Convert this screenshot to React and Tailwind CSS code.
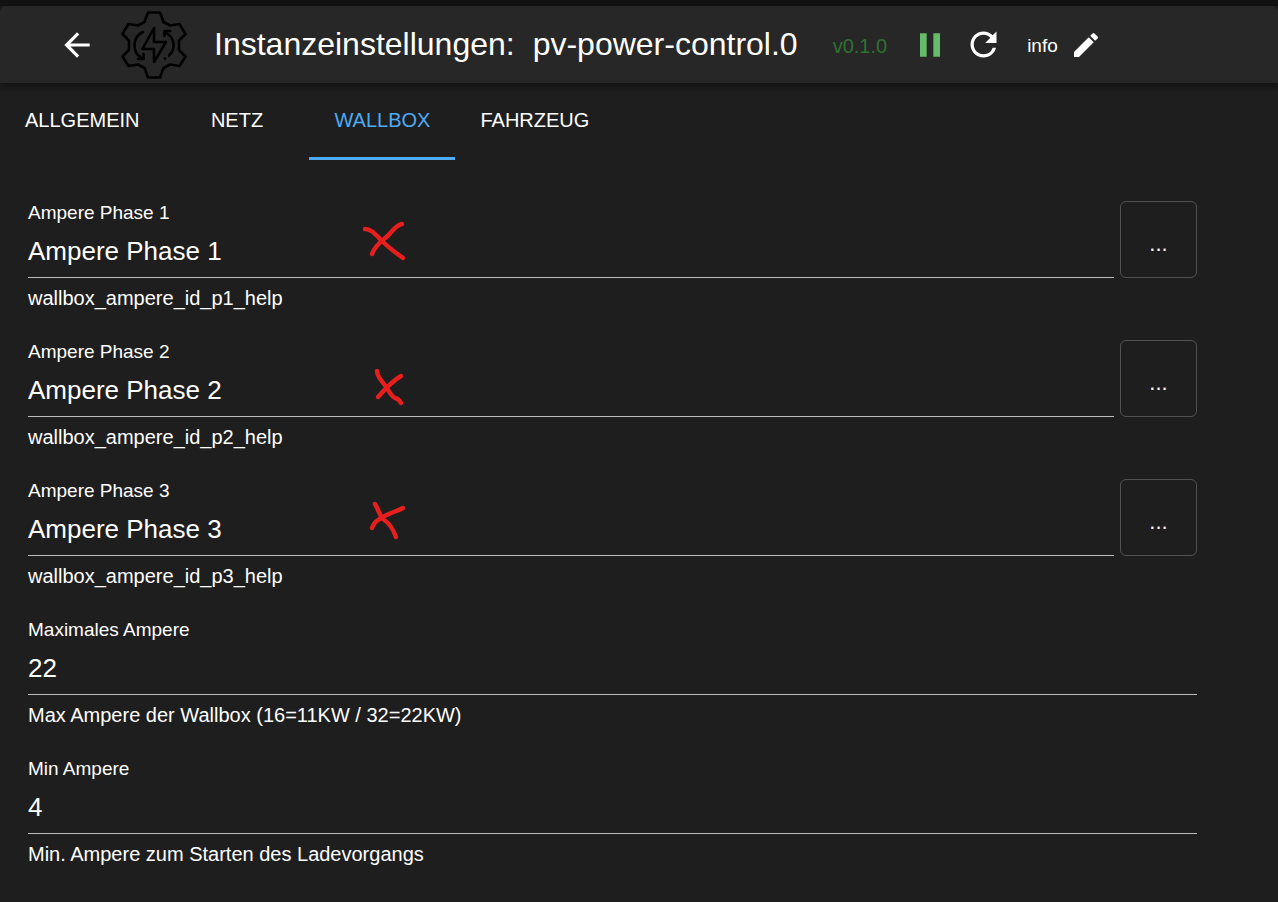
import React, { useState } from 'react';
import { MdArrowBack, MdPause, MdRefresh, MdEdit } from 'react-icons/md';

const TABS = [
  { id: 'allgemein', label: 'ALLGEMEIN' },
  { id: 'netz', label: 'NETZ' },
  { id: 'wallbox', label: 'WALLBOX' },
  { id: 'fahrzeug', label: 'FAHRZEUG' },
];

// mark: strokes of the hand-drawn cross, in a box that starts 330px into the field
const FIELDS = [
  {
    id: 'wallbox_ampere_id_p1',
    label: 'Ampere Phase 1',
    value: 'Ampere Phase 1',
    help: 'wallbox_ampere_id_p1_help',
    picker: true,
    mark: 'M7 28C13 28 17 33 24 40S38 52 45 57M44 23C37 24 33 33 26 38C20 43 16 47 14 53',
  },
  {
    id: 'wallbox_ampere_id_p2',
    label: 'Ampere Phase 2',
    value: 'Ampere Phase 2',
    help: 'wallbox_ampere_id_p2_help',
    picker: true,
    mark: 'M19 31C19 37 24 41 29 48C32 53 34 57 37 58C41 59 42 61 43 63M43 36C36 40 27 49 20 57',
  },
  {
    id: 'wallbox_ampere_id_p3',
    label: 'Ampere Phase 3',
    value: 'Ampere Phase 3',
    help: 'wallbox_ampere_id_p3_help',
    picker: true,
    mark: 'M17 25C20 30 21 35 25 40C31 44 35 49 38 58M45 29C38 33 31 34 25 38C20 41 16 43 14 49',
  },
  {
    id: 'wallbox_max_ampere',
    label: 'Maximales Ampere',
    value: '22',
    help: 'Max Ampere der Wallbox (16=11KW / 32=22KW)',
  },
  {
    id: 'wallbox_min_ampere',
    label: 'Min Ampere',
    value: '4',
    help: 'Min. Ampere zum Starten des Ladevorgangs',
  },
];

const AdapterLogo = () => (
  <svg
    viewBox="0 0 66 68"
    className="h-[68px] w-[66px] shrink-0"
    fill="none"
    stroke="#000"
    strokeWidth="2.6"
    strokeLinejoin="round"
    strokeLinecap="round"
    aria-hidden="true"
  >
    <path d="M27 1.5H39L42.5 11L49 14.5L58.5 13L64.5 23L58 29.5V39L64.5 45.5L58.5 55L49 53.5L42.5 57L39 66.5H27L23.5 57L17 53.5L7.5 55L1.5 45.5L8 39V29.5L1.5 23L7.5 13L17 14.5L23.5 11Z" />
    <path d="M33 17L21.5 38H33V51L45 31H33Z" />
    <path d="M22 21C11 26 11 41 20 46.5M17 48H22.5V43" />
    <path d="M46 22.5C54 28 55 38 48 44.5M43.5 25V20H49" />
    <path d="M44 47.5V47.6" />
  </svg>
);

const Field = ({ field }) => {
  const [value, setValue] = useState(field.value);

  return (
    <div className="flex items-start gap-[6px] pb-[30px]">
      <div className="relative min-w-0 flex-1">
        <label htmlFor={field.id} className="block text-[19px] leading-6">
          {field.label}
        </label>
        <input
          id={field.id}
          type="text"
          value={value}
          onChange={(e) => setValue(e.target.value)}
          aria-describedby={`${field.id}_text`}
          className="block h-[53px] w-full border-b border-[#bcbcbc] bg-transparent text-[26px] outline-none"
        />
        <p id={`${field.id}_text`} className="pt-2 text-[20px] leading-6">
          {field.help}
        </p>
        {field.mark && (
          <svg
            viewBox="0 0 52 68"
            className="pointer-events-none absolute top-0 left-[330px] h-[68px] w-[52px]"
            fill="none"
            stroke="#e61e1e"
            strokeWidth="4.4"
            strokeLinecap="round"
            aria-hidden="true"
          >
            <path d={field.mark} />
          </svg>
        )}
      </div>
      {field.picker && (
        <button
          type="button"
          className="h-[77px] w-[77px] shrink-0 rounded-md border border-[#515151] pt-2 text-[22px]"
        >
          ...
        </button>
      )}
    </div>
  );
};

const App = () => {
  const [tab, setTab] = useState('wallbox');

  return (
    <div className="min-h-screen bg-[#1e1e1e] pt-[6px] font-['Liberation_Sans',Arial,sans-serif] text-white shadow-[inset_0_6px_0_#121212]">
      <header className="flex h-[77px] items-center rounded-t-md bg-[#272727] pl-[58px] shadow-[0_3px_8px_rgba(0,0,0,0.5)]">
        <button type="button" aria-label="Zurück">
          <MdArrowBack size={38} />
        </button>
        <div className="ml-[25px]">
          <AdapterLogo />
        </div>
        <h1 className="ml-[27px] flex gap-[18px] pb-[2px] text-[32px] whitespace-nowrap">
          <span>Instanzeinstellungen:</span>
          <span>pv-power-control.0</span>
        </h1>
        <span className="ml-[35px] pt-[3px] text-[20px] text-[#2e7031]">v0.1.0</span>
        <button type="button" aria-label="Anhalten" className="ml-[23px] text-[#66bb6a]">
          <MdPause size={40} />
        </button>
        <button type="button" aria-label="Neu starten" className="ml-[14px]">
          <MdRefresh size={39} />
        </button>
        <button type="button" className="ml-6 flex items-center gap-3 text-[19px]">
          <span className="pt-1">info</span>
          <MdEdit size={32} />
        </button>
      </header>

      <nav role="tablist" className="flex h-[77px]">
        {TABS.map((t) => (
          <button
            key={t.id}
            type="button"
            role="tab"
            aria-selected={tab === t.id}
            onClick={() => setTab(t.id)}
            className={`min-w-[145px] border-b-3 px-[25px] text-[20px] ${
              tab === t.id ? 'border-[#4dabf5] text-[#4dabf5]' : 'border-transparent'
            }`}
          >
            {t.label}
          </button>
        ))}
      </nav>

      <form className="pt-[41px] pr-[81px] pl-7" onSubmit={(e) => e.preventDefault()}>
        {FIELDS.map((field) => (
          <Field key={field.id} field={field} />
        ))}
      </form>
    </div>
  );
};

export default App;
